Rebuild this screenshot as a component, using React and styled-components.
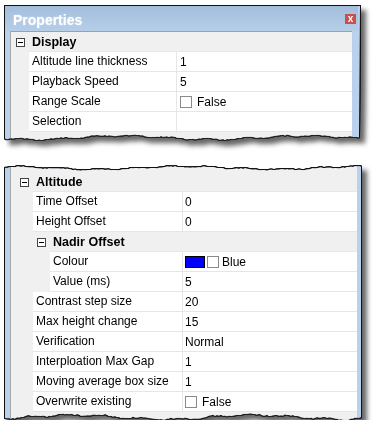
import React from 'react';
import styled, { createGlobalStyle } from 'styled-components';

const GlobalStyle = createGlobalStyle`
  body {
    margin: 0;
    background: #fff;
    font-family: 'Liberation Sans', Arial, sans-serif;
  }
`;

// jagged "torn paper" edge for the clip-path
const tornEdge = (w, base, amp, seed, dir) => {
  let s = seed;
  const rnd = () => {
    s = (s * 9301 + 49297) % 233280;
    return s / 233280;
  };
  const pts = [];
  for (let x = 0; x <= w; x += 2) {
    const n =
      0.5 +
      0.3 * Math.sin(x * 0.035 + seed) +
      0.12 * Math.sin(x * 0.17 + seed * 3) +
      (rnd() - 0.5) * 0.18;
    const off = Math.max(0, Math.min(1, n)) * amp;
    pts.push([Math.min(x, w), dir === 'top' ? off : base - off]);
  }
  return pts;
};

const clipFor = (w, h, { top, bottom, seed }) => {
  let pts = [];
  pts = top ? tornEdge(w, 0, top, seed, 'top') : [[0, 0], [w, 0]];
  const bot = bottom ? tornEdge(w, h, bottom, seed + 7, 'bottom').reverse() : [[w, h], [0, h]];
  pts = pts.concat(bot);
  return `polygon(${pts.map(([x, y]) => `${x.toFixed(1)}px ${y.toFixed(1)}px`).join(', ')})`;
};

const Page = styled.div`
  display: flex;
  flex-direction: column;
  gap: 26px;
  padding: 6px 0 0 5px;
`;

const Panel = styled.div`
  width: max-content;
  filter: drop-shadow(-1px 0 0 #111) drop-shadow(1px 0 0 #111) drop-shadow(0 -1px 0 #111)
    drop-shadow(0 1px 0 #222) drop-shadow(5px 5px 2.5px rgba(0, 0, 0, 0.6));
`;

const Frame = styled.div`
  display: flex;
  flex-direction: column;
  width: ${(p) => p.$w}px;
  height: ${(p) => p.$h}px;
  box-sizing: border-box;
  padding: 0 ${(p) => p.$right}px 0 5px;
  background: #b9d1ea;
  clip-path: ${(p) => p.$clip};
`;

const TitleBar = styled.div`
  display: flex;
  align-items: center;
  justify-content: space-between;
  height: 25px;
  margin: 0 -${(p) => p.$right - 2}px 0 -5px;
  padding: 0 0 0 8px;
  background: linear-gradient(#a3bedc, #b6cee8);
`;

const TitleText = styled.span`
  padding-top: 3px;
  color: #fff;
  font-size: 14px;
  font-weight: bold;
  text-shadow: 0 0 2px rgba(255, 255, 255, 0.5);
`;

const CloseButton = styled.span`
  display: flex;
  align-items: center;
  justify-content: center;
  width: 11px;
  height: 10px;
  margin-right: 2px;
  background: #c75050;
  color: #fff;
  font-size: 10px;
  font-weight: bold;
  line-height: 1;
`;

const Content = styled.div`
  flex: 1;
  box-sizing: border-box;
  padding-top: ${(p) => p.$padTop}px;
  border-left: 1px solid #a8a8a8;
  border-top: ${(p) => (p.$topBorder ? '1px solid #a0a0a0' : 'none')};
  background: #f0f0f0;
`;

const Row = styled.div`
  display: flex;
  height: 20px;
  font-size: 12px;
  color: #000;
`;

const Gutter = styled.div`
  flex: none;
  display: flex;
  align-items: center;
  justify-content: flex-end;
  box-sizing: border-box;
  width: ${(p) => p.$w}px;
  padding-right: 4px;
`;

const Toggle = styled.span`
  position: relative;
  width: 9px;
  height: 9px;
  box-sizing: border-box;
  border: 1px solid #444;
  background: #fff;
  &::after {
    content: '';
    position: absolute;
    left: 1px;
    right: 1px;
    top: 3px;
    height: 1px;
    background: #000;
  }
`;

const HeaderLabel = styled.div`
  flex: 1;
  padding-left: 3px;
  line-height: 20px;
  font-size: 12.5px;
  font-weight: bold;
  border-bottom: 1px solid #e8e8e8;
  box-sizing: border-box;
`;

const LabelCell = styled.div`
  flex: none;
  width: ${(p) => p.$w}px;
  box-sizing: border-box;
  padding-left: 3px;
  line-height: 19px;
  background: #fff;
  border-right: 1px solid #e6e6e6;
  border-bottom: 1px solid #e6e6e6;
  white-space: nowrap;
`;

const ValueCell = styled.div`
  flex: 1;
  display: flex;
  align-items: center;
  box-sizing: border-box;
  padding-left: ${(p) => p.$pad}px;
  background: #fff;
  border-bottom: 1px solid #e6e6e6;
`;

const CheckBox = styled.span`
  width: 12px;
  height: 12px;
  box-sizing: border-box;
  margin-right: ${(p) => p.$gap}px;
  border: 1px solid #8a8a8a;
  background: #fff;
`;

const Swatch = styled.span`
  width: 20px;
  height: 12px;
  box-sizing: border-box;
  margin-right: 2px;
  border: 1px solid #000;
  background: ${(p) => p.$color};
`;

const Value = ({ v, pad }) => {
  if (v && v.check !== undefined) {
    return (
      <ValueCell $pad={pad}>
        <CheckBox $gap={5} />
        {v.check}
      </ValueCell>
    );
  }
  if (v && v.color) {
    return (
      <ValueCell $pad={pad}>
        <Swatch $color={v.color} />
        <CheckBox $gap={3} />
        {v.name}
      </ValueCell>
    );
  }
  return <ValueCell $pad={pad}>{v}</ValueCell>;
};

const Group = ({ title, gutter, divider, pad, rows }) => (
  <>
    <Row>
      <Gutter $w={gutter}>
        <Toggle />
      </Gutter>
      <HeaderLabel>{title}</HeaderLabel>
    </Row>
    {rows.map((r) =>
      r.group ? (
        <Group key={r.group} title={r.group} gutter={gutter + 17} divider={divider} pad={pad} rows={r.rows} />
      ) : (
        <Row key={r[0]}>
          <Gutter $w={gutter} />
          <LabelCell $w={divider + 1 - gutter}>{r[0]}</LabelCell>
          <Value v={r[1]} pad={pad} />
        </Row>
      )
    )}
  </>
);

const displayRows = [
  ['Altitude line thickness', '1'],
  ['Playback Speed', '5'],
  ['Range Scale', { check: 'False' }],
  ['Selection', ''],
];

const altitudeRows = [
  ['Time Offset', '0'],
  ['Height Offset', '0'],
  {
    group: 'Nadir Offset',
    rows: [
      ['Colour', { color: '#0000ff', name: 'Blue' }],
      ['Value (ms)', '5'],
    ],
  },
  ['Contrast step size', '20'],
  ['Max height change', '15'],
  ['Verification', 'Normal'],
  ['Interploation Max Gap', '1'],
  ['Moving average box size', '1'],
  ['Overwrite existing', { check: 'False' }],
];

const clipTop = clipFor(355, 134, { bottom: 6, seed: 3 });
const clipBottom = clipFor(357, 254, { top: 5, bottom: 7, seed: 11 });

const App = () => (
  <Page>
    <GlobalStyle />
    <Panel>
      <Frame $w={355} $h={134} $right={8} $clip={clipTop}>
        <TitleBar $right={8}>
          <TitleText>Properties</TitleText>
          <CloseButton>x</CloseButton>
        </TitleBar>
        <Content $topBorder $padTop={0}>
          <Group title="Display" gutter={18} divider={165} pad={3} rows={displayRows} />
        </Content>
      </Frame>
    </Panel>
    <Panel>
      <Frame $w={357} $h={254} $right={5} $clip={clipBottom}>
        <Content $padTop={6}>
          <Group title="Altitude" gutter={22} divider={171} pad={2} rows={altitudeRows} />
        </Content>
      </Frame>
    </Panel>
  </Page>
);

export default App;
